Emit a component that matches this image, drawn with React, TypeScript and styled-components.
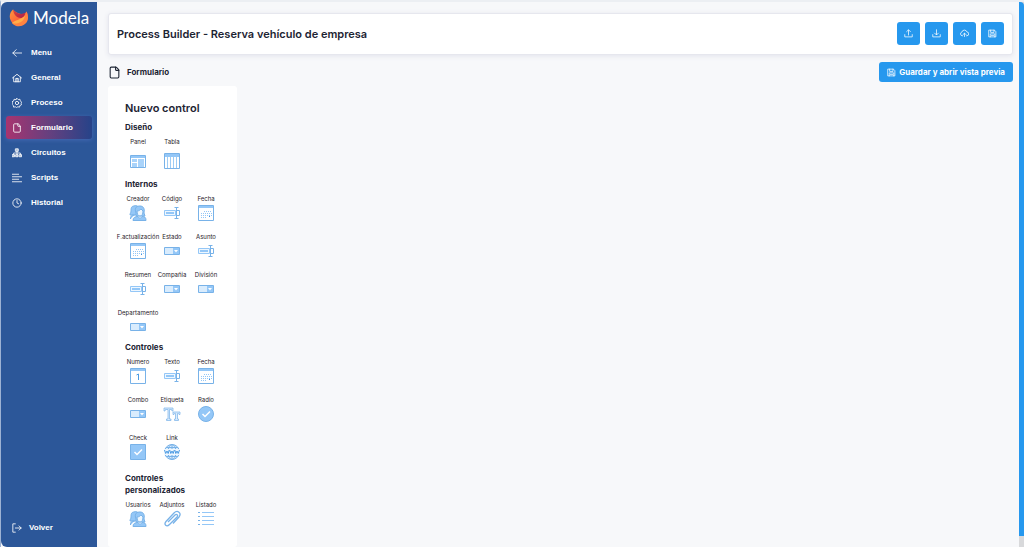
import React from 'react';
import styled, { createGlobalStyle } from 'styled-components';
import { File, Clock } from 'lucide-react';

const GlobalStyle = createGlobalStyle`
  *, *::before, *::after { box-sizing: border-box; }
  body {
    margin: 0;
    background: #f7f8fa;
    color: #1d2433;
    font-family: Inter, "Liberation Sans", sans-serif;
  }
  button { font: inherit; color: inherit; cursor: pointer; }
  svg { display: block; flex: none; }
`;

const Shell = styled.div`
  display: flex;
  min-height: 100vh;
  border-top: 2px solid #eceff3;
  border-left: 1px solid #9db2d3;
`;

const Sidebar = styled.aside`
  display: flex;
  flex-direction: column;
  flex: none;
  width: 96px;
  background: #2c5799;
  color: #fff;
  border-radius: 6px 0 0 6px;
`;

const Brand = styled.a`
  display: flex;
  align-items: center;
  gap: 4px;
  height: 32px;
  padding-left: 8px;
  color: #fff;
  font-family: Lato, sans-serif;
  font-size: 17px;
  line-height: 20px;
  text-decoration: none;
`;

const Menu = styled.nav`
  display: flex;
  flex-direction: column;
  flex: 1;
  gap: 2px;
  padding: 7px 5px 8px;
`;

const MenuLink = styled.a<{ $active?: boolean; $last?: boolean }>`
  display: flex;
  align-items: center;
  gap: ${p => (p.$last ? 7 : 9)}px;
  height: 23px;
  padding-left: 6px;
  margin-top: ${p => (p.$last ? 'auto' : 0)};
  border-radius: 3px;
  color: #fff;
  font-family: "Liberation Sans", Arial, sans-serif;
  font-size: 8px;
  font-weight: 700;
  line-height: 10px;
  text-decoration: none;
  background: ${p => (p.$active ? 'linear-gradient(90deg, #a8346f, #66407f 50%, #264389)' : 'none')};
  box-shadow: ${p => (p.$active ? '0 1px 4px #4668b5' : 'none')};
`;

const Content = styled.main`
  display: flex;
  flex-direction: column;
  flex: 1;
  min-width: 0;
  padding: 11px 6px 0 11px;
`;

const Header = styled.header`
  display: flex;
  align-items: center;
  justify-content: space-between;
  height: 42px;
  padding: 0 8px 1px;
  background: #fff;
  border: 1px solid #e6e7ee;
  border-radius: 3px;
  box-shadow: 0 1px 5px #e2e3ec;
`;

const Title = styled.h1`
  margin: 0;
  font-size: 11px;
  font-weight: 600;
  line-height: 16px;
`;

const Actions = styled.div`
  display: flex;
  gap: 5px;
`;

const IconButton = styled.button`
  display: grid;
  place-items: center;
  width: 23px;
  height: 23px;
  padding: 0;
  border: 0;
  border-radius: 3px;
  background: #2698ee;
  color: #fff;
`;

const SubHeader = styled.div`
  display: flex;
  align-items: center;
  justify-content: space-between;
  height: 31px;
  padding-top: 3px;
`;

const PageName = styled.h2`
  display: flex;
  align-items: center;
  gap: 6px;
  margin: 0;
  font-size: 8px;
  font-weight: 700;
  line-height: 12px;
`;

const PreviewButton = styled.button`
  display: flex;
  align-items: center;
  gap: 3px;
  height: 20px;
  padding: 0 8px;
  border: 0;
  border-radius: 3px;
  background: #2698ee;
  color: #fff;
  font-size: 8px;
  font-weight: 700;
  line-height: 12px;
`;

const Palette = styled.section`
  display: flex;
  flex-direction: column;
  flex: 1;
  width: 129px;
  padding: 14px 12px 16px 13px;
  background: #fff;
  border-radius: 3px;
`;

const PaletteTitle = styled.h2`
  margin: 0 0 5px 4px;
  font-size: 11px;
  font-weight: 600;
  line-height: 16px;
`;

const Group = styled.section<{ $space: number }>`
  margin-bottom: ${p => p.$space}px;
`;

const GroupTitle = styled.h3`
  margin: 0 0 4px 4px;
  font-size: 8px;
  font-weight: 700;
  line-height: 12px;
`;

const Grid = styled.div`
  display: grid;
  grid-template-columns: repeat(3, 34px);
  row-gap: 10px;
`;

const Control = styled.button<{ $tall?: boolean }>`
  display: flex;
  flex-direction: column;
  align-items: center;
  justify-content: space-between;
  height: ${p => (p.$tall ? 33 : 28)}px;
  padding: 0;
  border: 0;
  background: none;
  color: #1f2228;
  font-size: 6px;
  line-height: 10px;
  white-space: nowrap;
`;

const ScrollTrack = styled.div`
  flex: none;
  width: 5px;
  padding-bottom: 11px;
  background: #d8d9db;
`;

const ScrollThumb = styled.div`
  height: 100%;
  background: #2698ee;
  border-radius: 0 4px 0 0;
`;

type Kids = { children: React.ReactNode };

const Line = ({ children, size = 10 }: Kids & { size?: number }) => (
  <svg width={size} height={size} viewBox="0 0 24 24" fill="none" stroke="currentColor" strokeWidth="2" strokeLinecap="round" strokeLinejoin="round">
    {children}
  </svg>
);

const Logo = () => (
  <svg width="20" height="18" viewBox="0 0 20 18">
    <defs>
      <linearGradient id="flame" x1="0" y1="0" x2="1" y2="1">
        <stop offset="0" stopColor="#ff9a3c" />
        <stop offset="0.5" stopColor="#ff6a3a" />
        <stop offset="1" stopColor="#e8406a" />
      </linearGradient>
      <linearGradient id="ember" x1="0" y1="0" x2="1" y2="1">
        <stop offset="0" stopColor="#e2453a" />
        <stop offset="1" stopColor="#a81f4c" />
      </linearGradient>
    </defs>
    <path d="M4 .5C1 3-.5 8 2 12c3 6 11 6.500 15 1.500 2.500-3.500 2-8 .5-11-1 2-3 3-5.500 2.500C9 4.500 6 3 4 .5z" fill="url(#flame)" />
    <path d="M4 .5C6 3 9 4.500 12 5l4-1c0 3-1 4.500-4 5C8 9 4.500 5.500 4 .5z" fill="url(#ember)" />
    <path d="M17.500 2.500C17 6 14.500 8.500 11 10c-3 1.500-6 2-8 4 4 5 11 4 14.500-.5 2.500-3.500 1.500-8 0-11z" fill="#ff8440" />
    <path d="M3 14c2-2 5-2.500 8-4 2-.8 4-2 5-3.500-.5 4-3 6.500-6.500 7.500-2.500.8-4.500.8-6.500 0z" fill="#ffae48" />
  </svg>
);

const Back = () => (
  <Line><path d="M23 12H2M10 4l-8 8 8 8" /></Line>
);
const Home = () => (
  <Line><path d="M1 12 12 3l11 9M4 10v11h16V10M9 21v-8h6v8M12 13v8" /></Line>
);
const Gear = () => (
  <Line><path d="m12 1 3 3 4-1 1 4 3 3-1 3 1 3-4 2-1 4-4-1-3 2-3-2-4 1-1-4-3-3 1-3-1-3 4-2 1-4 4 1z" /><circle cx="12" cy="12" r="4" /></Line>
);
const Sitemap = () => (
  <Line><path d="M12 8v8M4 16v-4h16v4" /><path d="M9 2h6v6H9zM1 16h5v5H1zM9.500 16h5v5h-5zM18 16h5v5h-5z" fill="currentColor" fillOpacity=".6" /></Line>
);
const Scripts = () => (
  <Line><path d="M1 3h15M1 9h22M1 15h15M1 21h22" /></Line>
);
const Exit = () => (
  <Line><path d="M8 2H2v20h6M8 12h14M17 7l5 5-5 5" /></Line>
);
const Upload = () => (
  <Line size={9}><path d="M12 16V3M7 7l5-5 5 5M2 15v6h20v-6" /></Line>
);
const Download = () => (
  <Line size={9}><path d="M12 2v13M7 11l5 5 5-5M2 15v6h20v-6" /></Line>
);
const Cloud = () => (
  <Line size={9}><path d="M7 18H6a5 5 0 0 1-1-9.800A7 7 0 0 1 18.500 8 5 5 0 0 1 18 18h-1M12 20v-8M8 15l4-4 4 4" /></Line>
);
const Save = () => (
  <Line size={9}><path d="M3 3h14l4 4v14H3zM7 3v6h9V3M6 21v-8h12v8M9 17h6" /></Line>
);

const BLUE = '#78b2e8';
const MID = '#94c7f7';
const PALE = '#d9ecfd';

const Art = ({ children }: Kids) => (
  <svg width="18" height="18" viewBox="0 0 18 18" fill="none" stroke={BLUE} strokeWidth="1">{children}</svg>
);

const art: Record<string, React.ReactNode> = {
  panel: (
    <Art>
      <path d="M1.500 3.500h15v12h-15z" fill="#fff" />
      <path d="M2 4h14v2H2z" fill={MID} stroke="none" />
      <path d="M3 7h5v3H3zM3 11h5v4H3zM9 7h6v8H9z" fill="#a9d3fa" stroke="none" />
    </Art>
  ),
  table: (
    <Art>
      <path d="M1.500 1.500h15v15h-15z" fill="#fff" />
      <path d="M2 2h14v3H2z" fill={MID} stroke="none" />
      <path d="M4.500 5v11M7.500 5v11M10.500 5v11M13.500 5v11" stroke="#9dccf5" />
    </Art>
  ),
  users: (
    <Art>
      <path d="M5 2c-3 0-3 3-3 5 0 2-1 2-1 4h5l4-2V4C9 2 7 1 5 2zM1.500 15c0-3 1-4 4-4" fill={MID} />
      <path d="M7 9C5 3 8 2 11 2s5 2 4 7l1 3H7z" fill={MID} />
      <path d="M8 7c2 0 3-1 4-2l2 2c0 3-1 5-3 5S8 10 8 7z" fill="#eef7ff" />
      <path d="M4 16.500c0-3 2-4 5-4l2 2 2-2c3 0 4 1 4 4z" fill={MID} />
    </Art>
  ),
  text: (
    <Art>
      <path d="M1.500 6.500h11v5h-11z" fill="#eef7ff" stroke={MID} />
      <path d="M3 9h8" stroke={MID} strokeWidth="2" />
      <path d="M11.500 3.500h4M13.500 3.500v11M11.500 14.500h4M14 6.500h2.500v5H14" />
    </Art>
  ),
  date: (
    <Art>
      <path d="M1.500 1.500h15v15h-15z" fill="#fff" />
      <path d="M2 2h14v2H2z" fill={MID} stroke="none" />
      <path d="M7 7.500h8M4 9.500h11M4 11.500h11M4 13.500h6" stroke={MID} strokeDasharray="1 1" />
      <path d="M12 12h1v1h-1z" fill="#3f91dd" stroke="none" />
    </Art>
  ),
  combo: (
    <Art>
      <path d="M1.500 5.500h15v7h-15z" fill={PALE} />
      <path d="M10 6h6v6h-6z" fill={MID} stroke="none" />
      <path d="M11 8h4l-2 2.500z" fill="#fff" stroke="none" />
    </Art>
  ),
  number: (
    <Art>
      <path d="M1.500 1.500h15v15h-15z" fill="#fff" />
      <path d="M2 2h14v2H2z" fill={MID} stroke="none" />
      <path d="M7.500 8 9.500 7v6" stroke="#4c9be3" />
    </Art>
  ),
  label: (
    <Art>
      <path d="M1 3h9v3H9L8.500 4.500h-2V14H8v1.500H3.500V14H5V4.500H2.500L2 6H1zM10 7h7v2.500h-1L15.500 8.500h-1V14h1v1.500h-4V14h1V8.500h-1L11 9.500h-1z" fill={PALE} strokeWidth=".7" />
    </Art>
  ),
  radio: (
    <Art>
      <circle cx="9" cy="9" r="7.500" fill={MID} />
      <path d="m5.500 9 2.500 2.500 5-5" stroke="#fff" strokeWidth="1.500" />
    </Art>
  ),
  check: (
    <Art>
      <path d="M1.500 1.500h15v15h-15z" fill={MID} />
      <path d="m5.500 9 2.500 2.500 5-5" stroke="#fff" strokeWidth="1.500" />
    </Art>
  ),
  link: (
    <Art>
      <circle cx="9" cy="9" r="7.500" fill={PALE} />
      <ellipse cx="9" cy="9" rx="4" ry="7.500" />
      <path d="M9 1.500v15M3 4.500h12M3 13.500h12" />
      <path d="M1 6h16v6H1z" fill="#eef7ff" stroke="none" />
      <path d="m1.500 7 1.200 3.500L4 8l1.200 2.500L6.200 7M6.700 7l1.100 3.500L9 8l1.200 2.500L11.300 7M11.800 7l1 3.500L14 8l1.200 2.500L16.500 7" stroke="#4c9be3" />
    </Art>
  ),
  clip: (
    <Art>
      <path d="m5 12 7-7c1.500-1.500 3.500 0 2 2l-7.500 7.500c-3 3-6 0-3.500-3L11 3c3.500-3.500 8 0 5 4l-6 6.500" stroke={BLUE} strokeWidth="1.300" />
    </Art>
  ),
  list: (
    <Art>
      <path d="M1 2.500h2M1 6.500h2M1 10.500h2M1 14.500h2" />
      <path d="M5 2.500h12M5 6.500h12M5 10.500h12M5 14.500h12" stroke={MID} />
    </Art>
  ),
};

const groups: { title: React.ReactNode; space: number; tall?: boolean; items: [string, string][] }[] = [
  { title: 'Diseño', space: 8, tall: true, items: [['Panel', 'panel'], ['Tabla', 'table']] },
  {
    title: 'Internos', space: 5, items: [
      ['Creador', 'users'], ['Código', 'text'], ['Fecha', 'date'],
      ['F.actualización', 'date'], ['Estado', 'combo'], ['Asunto', 'text'],
      ['Resumen', 'text'], ['Compañia', 'combo'], ['División', 'combo'],
      ['Departamento', 'combo'],
    ],
  },
  {
    title: 'Controles', space: 11, items: [
      ['Numero', 'number'], ['Texto', 'text'], ['Fecha', 'date'],
      ['Combo', 'combo'], ['Etiqueta', 'label'], ['Radio', 'radio'],
      ['Check', 'check'], ['Link', 'link'],
    ],
  },
  {
    title: <>Controles<br />personalizados</>, space: 0,
    items: [['Usuarios', 'users'], ['Adjuntos', 'clip'], ['Listado', 'list']],
  },
];

export default function App() {
  return (
    <>
      <GlobalStyle />
      <Shell>
        <Sidebar>
          <Brand href="#"><Logo />Modela</Brand>
          <Menu>
            <MenuLink href="#"><Back />Menu</MenuLink>
            <MenuLink href="#"><Home />General</MenuLink>
            <MenuLink href="#"><Gear />Proceso</MenuLink>
            <MenuLink href="#" $active aria-current="page"><File size={10} />Formulario</MenuLink>
            <MenuLink href="#"><Sitemap />Circuitos</MenuLink>
            <MenuLink href="#"><Scripts />Scripts</MenuLink>
            <MenuLink href="#"><Clock size={10} />Historial</MenuLink>
            <MenuLink href="#" $last><Exit />Volver</MenuLink>
          </Menu>
        </Sidebar>
        <Content>
          <Header>
            <Title>Process Builder - Reserva vehículo de empresa</Title>
            <Actions>
              <IconButton aria-label="Subir"><Upload /></IconButton>
              <IconButton aria-label="Descargar"><Download /></IconButton>
              <IconButton aria-label="Publicar"><Cloud /></IconButton>
              <IconButton aria-label="Guardar"><Save /></IconButton>
            </Actions>
          </Header>
          <SubHeader>
            <PageName><File size={13} strokeWidth={2} />Formulario</PageName>
            <PreviewButton><Save />Guardar y abrir vista previa</PreviewButton>
          </SubHeader>
          <Palette>
            <PaletteTitle>Nuevo control</PaletteTitle>
            {groups.map((group, i) => (
              <Group key={i} $space={group.space}>
                <GroupTitle>{group.title}</GroupTitle>
                <Grid>
                  {group.items.map(([name, icon]) => (
                    <Control key={name} $tall={group.tall}>
                      {name}
                      {art[icon]}
                    </Control>
                  ))}
                </Grid>
              </Group>
            ))}
          </Palette>
        </Content>
        <ScrollTrack><ScrollThumb /></ScrollTrack>
      </Shell>
    </>
  );
}
